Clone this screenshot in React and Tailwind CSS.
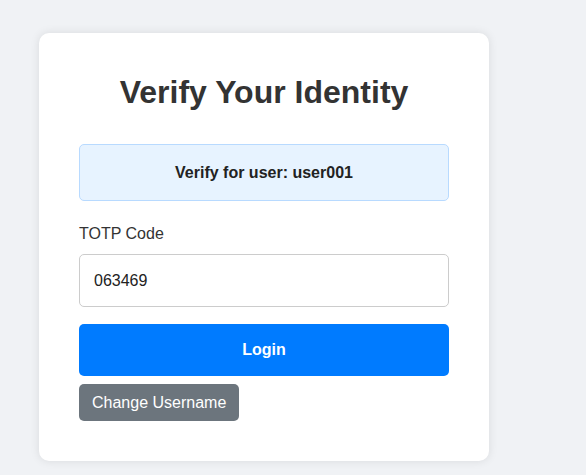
const App = () => {
  return (
    <div className="min-h-screen bg-[#f0f2f5] pl-[39px] pt-[33px] font-['Liberation_Sans',Arial,sans-serif]">
      <div className="w-[450px] rounded-[10px] bg-white px-10 pt-[41px] pb-10 shadow-[0_0_10px_rgba(0,0,0,0.1)]">
        <h2 className="mb-[33px] text-center text-[32px] leading-[37px] font-bold text-[#333]">
          Verify Your Identity
        </h2>

        {/* user info */}
        <div className="flex h-[57px] items-center justify-center rounded-[5px] border border-[#b8daff] bg-[#e7f3ff]">
          <strong className="text-base text-[#222]">Verify for user: user001</strong>
        </div>

        <label className="mt-[24px] mb-[11px] block text-base leading-[18px] text-[#333]">TOTP Code</label>
        <input
          type="text"
          defaultValue="063469"
          className="block h-[53px] w-full rounded-[5px] border border-[#ccc] px-[14px] text-base text-[#222] outline-none"
        />

        <button className="mt-[17px] block h-[52px] w-full rounded-[5px] bg-[#007bff] text-base font-bold text-white">
          Login
        </button>
        <button className="mt-2 block h-[37px] rounded-[5px] bg-[#6c757d] px-[13px] text-base text-white">
          Change Username
        </button>
      </div>
    </div>
  );
};

export default App;
